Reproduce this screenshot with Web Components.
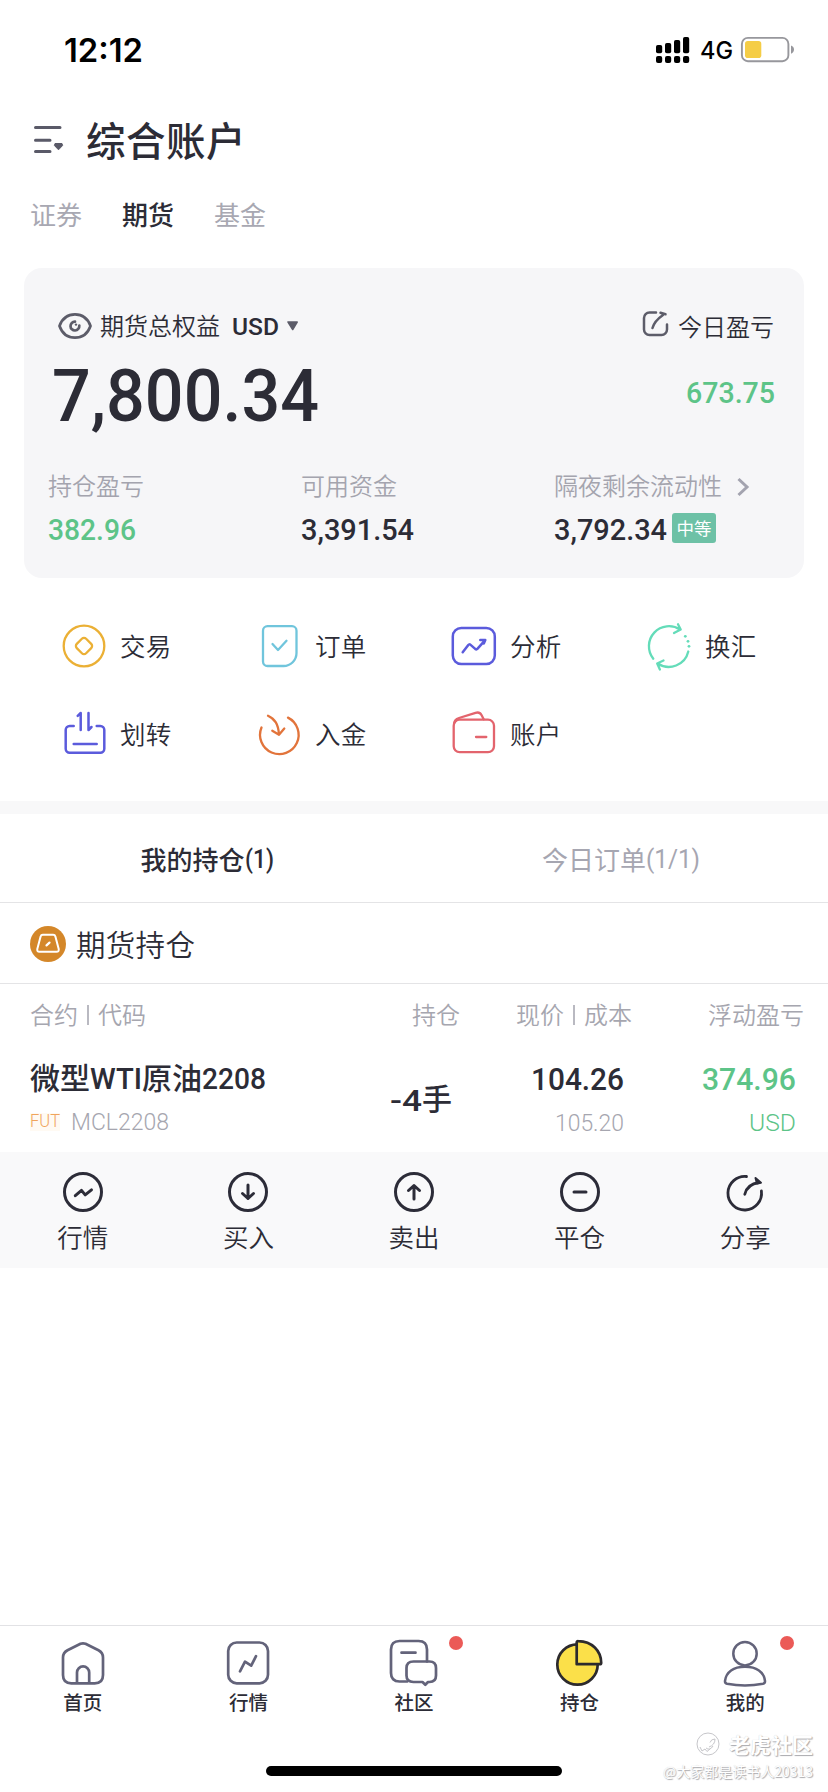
<!DOCTYPE html>
<html lang="zh-CN">
<head>
<meta charset="utf-8">
<title>综合账户</title>
<style>
html,body{margin:0;padding:0;background:#fff}
body{width:828px;height:1792px;overflow:hidden;font-family:"Noto Sans CJK SC",sans-serif;color:#2c2c36}
</style>
</head>
<body>
<account-app></account-app>
<script>
const define = (name, html, setup) => {
  const tpl = document.createElement('template');
  tpl.innerHTML = html;
  customElements.define(name, class extends HTMLElement {
    constructor() {
      super();
      this.attachShadow({mode: 'open'}).append(tpl.content.cloneNode(true));
    }
    connectedCallback() { if (setup) setup(this, this.shadowRoot); }
  });
};

/* Latin text and figures squeezed to a condensed width given by "w" */
define('fit-text', `<style>
:host{display:inline-block;font-family:Roboto,sans-serif;line-height:1;white-space:nowrap;flex:none}
span{display:inline-block;transform-origin:0 0;line-height:1}
</style><span><slot></slot></span>`, (el, root) => {
  const w = +el.getAttribute('w'), s = root.querySelector('span');
  el.style.width = w + 'px';
  new ResizeObserver(() => {
    s.style.transform = 'none';
    s.style.transform = `scaleX(${w / s.getBoundingClientRect().width})`;
  }).observe(s);
});

const ICONS = {
  menu: [32, 34, `<g stroke="#5a5a68" stroke-width="3" stroke-linecap="round"><path d="M4.500 8.5H29M4.500 21.200H19M4.500 32.400H19"/></g><path d="M24 24.500h7l.6 2-4.100 4.300-4.100-4.300z" fill="#5a5a68" stroke="#5a5a68" stroke-linejoin="round"/>`],
  eye: [36, 30, `<g stroke="#5c5c69" stroke-width="2.700"><path d="M2.500 15C5.500 6.500 11.500 3.400 18 3.400S30.500 6.500 33.500 15C30.500 23.500 24.500 26.600 18 26.600S5.500 23.500 2.500 15z"/><path d="M18 10.700a4.400 4.400 0 1 0 4.300 4" stroke-linecap="round"/></g><circle cx="19" cy="13.600" r="1.200" fill="#5c5c69"/>`],
  caret: [14, 12, `<path d="M2 2h9.200L6.700 9.500z" fill="#5c5c69" stroke="#5c5c69" stroke-width="1.500" stroke-linejoin="round"/>`],
  export: [28, 28, `<g stroke="#5c5c69" stroke-width="2.500" stroke-linecap="round" stroke-linejoin="round"><path d="M15 2.500H8.500a5.500 5.500 0 0 0-5.500 5.500V19.500A5.500 5.500 0 0 0 8.500 25h12a5.500 5.500 0 0 0 5.500-5.500V14.500"/><path d="M11.500 18C13 12.500 17 8.500 22 5M19.500 2.800L24.500 4.300"/></g>`],
  chevron: [16, 22, `<path d="M3.500 3l8.500 8-8.500 8" stroke="#a3a3af" stroke-width="3"/>`],
  trade: [48, 48, `<g stroke="#ebb035" stroke-width="2.300"><circle cx="24" cy="24" r="20.300"/><rect x="17.400" y="17.400" width="13.200" height="13.200" rx="3" transform="rotate(45 24 24)"/></g>`],
  order: [48, 48, `<g stroke="#70c5dc" stroke-width="2.300" stroke-linecap="round" stroke-linejoin="round"><path d="M12.500 4.200H37a4.500 4.500 0 0 1 4.500 4.500V31a13 13 0 0 1-13 13h-16a4.500 4.500 0 0 1-4.500-4.500V8.700a4.500 4.500 0 0 1 4.500-4.500z"/><path d="M17.500 22l5.500 6 8.500-9.200"/></g>`],
  analyze: [48, 48, `<g stroke="#5b5bdc" stroke-width="2.500" stroke-linecap="round" stroke-linejoin="round"><rect x="2.800" y="6" width="42" height="36" rx="8.500"/><path d="M12.700 30.300l5.600-7.300q1-1.200 2.300-.1l4.600 4q1.300 1 2.400-.2l7.100-8M30.300 18h5l-1.500 3.500" /></g>`],
  exchange: [48, 48, `<g stroke="#64dcb9" stroke-width="2.300" stroke-linecap="round" stroke-linejoin="round"><path d="M8.300 36.700A20 20 0 0 1 35.200 7.700M33 2.200l2.700 5.300-6.700 3.500M43.300 29.500A20 20 0 0 1 12.700 41.500M18.500 38.500l-6.300 3 2.700 6"/></g><g fill="#64dcb9"><circle cx="40.300" cy="14.300" r="1.400"/><circle cx="43" cy="19.300" r="1.400"/><circle cx="44" cy="24.300" r="1.400"/></g>`],
  transfer: [48, 48, `<g stroke="#5b5bdc" stroke-width="2.500" stroke-linecap="round" stroke-linejoin="round"><path d="M13.700 16h-4a4 4 0 0 0-4 4v18.700a4 4 0 0 0 4 4h30.600a4 4 0 0 0 4-4V20a4 4 0 0 0-4-4h-3.600M13.700 34h23"/><path d="M20.700 20V3L17.700 5.800M28.500 3v17l3-3"/></g>`],
  deposit: [48, 48, `<g stroke="#e2743b" stroke-width="2.300" stroke-linecap="round" stroke-linejoin="round"><path d="M6.500 17.500A19.300 19.300 0 1 0 33 7.600"/><path d="M13 5.700C20 9 23.200 14 24 24.300M17.300 20.700l6.700 4 5.300-6.200"/></g>`],
  wallet: [48, 48, `<g stroke="#e3646d" stroke-width="2.300" stroke-linecap="round" stroke-linejoin="round"><rect x="3.700" y="9.700" width="40.300" height="32.500" rx="6"/><path d="M4 14C4.300 10 6 8.900 9 8l16.500-5.200c3-.9 4.700-.2 6 2.200l2.200 4.200M26 27h10.300"/></g>`],
  weight: [38, 38, `<circle cx="19" cy="19" r="18" fill="#d48729"/><path d="M13.800 9.800h10.400q1.700 0 2.200 1.700l3.300 12.500q.5 2.700-2.200 2.700h-17q-2.700 0-2.200-2.700l3.300-12.500q.5-1.700 2.200-1.700z" stroke="#fff" stroke-width="2"/><path d="M17.500 20.400l3-2.800" stroke="#fff" stroke-width="2.200" stroke-linecap="round"/>`],
  quote: [44, 44, `<g stroke="#2c2c38" stroke-width="3" stroke-linecap="round" stroke-linejoin="round"><circle cx="22" cy="22" r="18.500"/><path d="M14.300 25.700l6.200-5.300 3.700 4.500 6.300-5"/></g>`],
  buy: [44, 44, `<g stroke="#2c2c38" stroke-width="3" stroke-linecap="round" stroke-linejoin="round"><circle cx="22" cy="22" r="18.500"/><path d="M22 15v13.500M16.500 23.500l5.500 5 5.500-5"/></g>`],
  sell: [44, 44, `<g stroke="#2c2c38" stroke-width="3" stroke-linecap="round" stroke-linejoin="round"><circle cx="22" cy="22" r="18.500"/><path d="M22 29V15.500M16.500 20.500l5.500-5 5.500 5"/></g>`],
  close: [44, 44, `<g stroke="#2c2c38" stroke-width="3" stroke-linecap="round"><circle cx="22" cy="22" r="18.500"/><path d="M16 22h12"/></g>`],
  share: [44, 44, `<g stroke="#2c2c38" stroke-width="2.800" stroke-linecap="round" stroke-linejoin="round"><path d="M23.500 6.500A16.800 16.800 0 1 0 38.400 21"/><path d="M21.800 24.300C23.500 17 29 13.500 36 12.500"/></g><path d="M32.500 8l5.500 4.700-4 .8z" fill="#2c2c38" stroke="#2c2c38" stroke-width="2" stroke-linejoin="round"/>`],
  home: [48, 48, `<g stroke="#63637a" stroke-width="2.700" stroke-linejoin="round"><path d="M21.500 5.800q2.500-1 5 0l13 6.500q4.500 2.400 4.500 7.200V37q0 8.300-8.300 8.300H12.300Q4 45.300 4 37V19.500q0-4.800 4.500-7.200z"/><path d="M18 45V34.500a6.100 6.100 0 0 1 12.200 0V45"/></g>`],
  chart: [48, 48, `<g stroke="#63637a" stroke-width="2.700" stroke-linecap="round" stroke-linejoin="round"><rect x="4.200" y="4.500" width="39.800" height="40.800" rx="8.500"/><path d="M16 33.300l5-9.600 6.200 4L32 18.200"/></g>`],
  community: [48, 48, `<g stroke="#63637a" stroke-width="2.700" stroke-linecap="round" stroke-linejoin="round"><path d="M17.300 43.500H9.500Q1 43.500 1 35V11.500Q1 3 9.500 3h19q8.500 0 8.500 8.500V23.500M11.500 14.700h14"/><path d="M23.500 23.500h16q6.500 0 6.500 6.500v7.500q0 6.500-6.500 6.500h-1.500L35.300 46.700 32.500 44h-9q-7 0-7-6.500V30q0-6.500 7-6.500z"/></g>`],
  position: [48, 48, `<g fill="#fbe049" stroke="#2c2a2d" stroke-width="2.700" stroke-linejoin="round"><circle cx="21.500" cy="26.500" r="20.200"/><path d="M20.700 26.200V4.500q0-1.500 1.500-1.400C36 3.400 45 12.500 45.200 24.700q0 1.500-1.500 1.500z"/></g>`],
  mine: [48, 48, `<g stroke="#63637a" stroke-width="2.500" stroke-linejoin="round"><circle cx="24" cy="15.700" r="11.700"/><path d="M4 43C5 34 12.500 28.800 24 28.800S43 34 44 43q.2 2.200-2 2.700-18 3.500-36 0-2.200-.5-2-2.700z"/></g>`],
  signal: [36, 28, `<g fill="#000"><rect x="1" y="9" width="6.200" height="8.200" rx="1.800"/><rect x="10" y="7" width="6.200" height="10.200" rx="1.800"/><rect x="19" y="4" width="6.200" height="13.200" rx="1.800"/><rect x="28" y="1" width="6.200" height="16.200" rx="1.800"/><rect x="1" y="20" width="6.200" height="7" rx="2"/><rect x="10" y="20" width="6.200" height="7" rx="2"/><rect x="19" y="20" width="6.200" height="7" rx="2"/><rect x="28" y="20" width="6.200" height="7" rx="2"/></g>`],
  battery: [56, 28, `<rect x="1.900" y="1.900" width="46.500" height="23.300" rx="6" stroke="#97979c" stroke-width="1.900"/><rect x="5" y="5" width="16.300" height="17" rx="2.800" fill="#f5cd46"/><path d="M51 9.500v8.200q3-1.200 3-4.100t-3-4.100z" fill="#97979c"/>`],
  tiger: [24, 24, `<g stroke="#c6c6ca" stroke-width="1"><circle cx="12" cy="12" r="11"/><path d="M4 15l2 4 3-2 2 2.500 3-2.500M13 15q6-2 6-8-4 0-5 3.500M10 16q4 3 7-2"/></g>`]
};
define('ui-icon', `<style>:host{display:block;flex:none}svg{display:block;overflow:visible}</style>`, (el, root) => {
  const [w, h, body] = ICONS[el.getAttribute('name')];
  root.innerHTML += `<svg width="${w}" height="${h}" viewBox="0 0 ${w} ${h}" fill="none">${body}</svg>`;
});

define('status-bar', `<style>
:host{display:flex;height:100px;align-items:flex-start;color:#000;box-sizing:border-box;padding:36px 32px 0 64px}
.time{font:600 32px/28px Inter,sans-serif;margin-top:-1px}
.net{font:500 24px/30px Inter,sans-serif;margin-left:9px;flex:none}
.gap{flex:1}
ui-icon[name=battery]{margin-left:7px}
</style><fit-text class="time" w="79">12:12</fit-text><div class="gap"></div><ui-icon name="signal"></ui-icon><fit-text class="net" w="33">4G</fit-text><ui-icon name="battery"></ui-icon>`);

define('page-title', `<style>
:host{display:flex;height:80px;padding-left:31px;align-items:flex-start}
ui-icon{margin-top:19px}
h1{margin:9px 0 0 23px;font-size:39.500px;letter-spacing:.5px;line-height:60px;font-weight:500}
</style><ui-icon name="menu"></ui-icon><h1><slot></slot></h1>`);

define('account-tabs', `<style>
:host{display:flex;height:88px;padding:15px 0 0 30px;gap:40px;font-size:26px;line-height:38px;color:#a8a8b2;box-sizing:border-box}
b{font-weight:500;color:#2c2c36}
</style><span>证券</span><b>期货</b><span>基金</span>`);

define('asset-card', `<style>
:host{display:flex;flex-direction:column;box-sizing:border-box;margin:0 24px;height:310px;background:#f6f6f8;border-radius:18px;padding:44px 0 0 25px;font-size:24px;line-height:28px}
.top,.total{display:flex}
.top{height:28px;padding-left:7px;font-weight:350}
.top ui-icon[name=eye]{margin:-1px 0 0 1px}
.top .name{margin:-1px 0 0 7px}
.usd{margin:3px 0 0 12px}
ui-icon[name=caret]{margin:8px 0 0 7px}
.today{display:flex;margin:0 30px 0 auto}
ui-icon[name=export]{margin:-2px 9px 0 0}
.total{height:132px;justify-content:space-between;align-items:flex-start}
.big{font-size:73px;margin:20px 0 0 3px}
.day{font-size:30px;margin:38px 29px 0 0}
.green{color:#5dc488}
fit-text{font-weight:500}
.grid{display:grid;grid-template-columns:253px 253px 1fr}
.k{color:#a4a4ae;font-weight:350;display:flex;height:42px;line-height:26px;margin-left:-1px}
ui-icon[name=chevron]{margin:4px 0 0 13px}
.v{display:flex;font-size:30px;height:30px;margin-left:-1px;padding-top:1px}
.badge{background:#6dc1a6;color:#fff;font-size:17.500px;line-height:29px;height:30px;width:44px;text-align:center;border-radius:3px;margin:-2px 0 0 5px}
</style>
<div class="top"><ui-icon name="eye"></ui-icon><span class="name">期货总权益</span><fit-text class="usd" w="47">USD</fit-text><ui-icon name="caret"></ui-icon><span class="today"><ui-icon name="export"></ui-icon>今日盈亏</span></div>
<div class="total"><fit-text class="big" w="267">7,800.34</fit-text><fit-text class="day green" w="89">673.75</fit-text></div>
<div class="grid">
<div><div class="k">持仓盈亏</div><div class="v green"><fit-text w="88">382.96</fit-text></div></div>
<div><div class="k">可用资金</div><div class="v"><fit-text w="113">3,391.54</fit-text></div></div>
<div><div class="k">隔夜剩余流动性<ui-icon name="chevron"></ui-icon></div><div class="v"><fit-text w="113">3,792.34</fit-text><span class="badge">中等</span></div></div>
</div>`);

define('menu-item', `<style>
:host{display:flex;height:48px;padding-left:36px;font-size:25.500px;line-height:46px;font-weight:350}
span{margin-left:12px;letter-spacing:.3px}
</style><span><slot></slot></span>`, (el, root) => {
  const i = document.createElement('ui-icon');
  i.setAttribute('name', el.getAttribute('icon'));
  root.querySelector('span').before(i);
});

define('action-menu', `<style>
:host{display:grid;grid-template-columns:repeat(4,195px);grid-auto-rows:48px;row-gap:40px;padding:44px 24px 0;height:223px;box-sizing:border-box}
</style><menu-item icon="trade">交易</menu-item><menu-item icon="order">订单</menu-item><menu-item icon="analyze">分析</menu-item><menu-item icon="exchange">换汇</menu-item><menu-item icon="transfer">划转</menu-item><menu-item icon="deposit">入金</menu-item><menu-item icon="wallet">账户</menu-item>`);

define('list-tabs', `<style>
:host{display:grid;grid-template-columns:1fr 1fr;height:102px;box-sizing:border-box;border-top:13px solid #f8f8f9;border-bottom:1px solid #e4e4e6;font-size:26px;line-height:90px;color:#a6a6b1;font-weight:400}
div{display:flex;justify-content:center}
.on{color:#2c2c36;font-weight:500}
fit-text{line-height:1;margin-top:32px;font-size:26px}
</style><div class="on">我的持仓<fit-text w="29">(1)</fit-text></div><div>今日订单<fit-text w="54">(1/1)</fit-text></div>`);

define('section-title', `<style>
:host{display:flex;align-items:center;height:81px;box-sizing:border-box;border-bottom:1px solid #e4e4e6;padding:1px 0 0 29px;font-size:29.500px;font-weight:350;letter-spacing:.3px}
span{margin:-1px 0 0 9px}
</style><ui-icon name="weight"></ui-icon><span><slot></slot></span>`);

define('holdings-table', `<style>
:host{display:block;height:168px;padding:0 24px 0 30px}
.head,.row{display:grid;grid-template-columns:310px 120px 172px 172px}
.head{font-size:24px;line-height:60px;height:62px;color:#a6a6af;font-weight:350;text-align:right}
.head :first-child{text-align:left}
.bar{margin:0 9px;display:inline-block;width:2px;height:20px;background:#b9b9c1;vertical-align:-1px}
.row{height:106px}
.name{display:flex;font-size:30px;font-weight:500;line-height:38px;height:43px;padding-top:11px}
.name fit-text{margin:7px 0 0;font-size:30px}
.code{display:flex;margin-top:12px;align-items:flex-start}
.fut{color:#f0a45c;font-size:17.500px;background:#fffaf3;font-weight:350;margin-top:1px}
.mcl{color:#a6a6af;font-size:24px;font-weight:300;margin-left:11px;margin-top:-2px}
.qty{display:flex;font-size:30px;font-weight:500;line-height:38px;padding-top:32px;justify-content:flex-end}
.qty fit-text{margin-top:8px}
.qty span{margin:0 8px 0 0}
.col{display:flex;flex-direction:column;align-items:flex-end;padding-right:8px}
.p{font-size:31px;font-weight:500;margin-top:18px}
.c{font-size:24px;font-weight:300;color:#a6a6af;margin-top:15.500px}
.green{color:#5dc488}
</style>
<div class="head"><span>合约<i class="bar"></i>代码</span><span>持仓</span><span>现价<i class="bar"></i>成本</span><span>浮动盈亏</span></div>
<div class="row">
<div><div class="name">微型<fit-text w="52">WTI</fit-text>原油<fit-text w="64">2208</fit-text></div><div class="code"><fit-text class="fut" w="30">FUT</fit-text><fit-text class="mcl" w="98">MCL2208</fit-text></div></div>
<div class="qty"><fit-text w="32">-4</fit-text><span>手</span></div>
<div class="col"><fit-text class="p" w="93">104.26</fit-text><fit-text class="c" w="69">105.20</fit-text></div>
<div class="col"><fit-text class="p green" w="94">374.96</fit-text><fit-text class="c green" w="47">USD</fit-text></div>
</div>`);

define('row-actions', `<style>
:host{display:grid;grid-template-columns:repeat(5,1fr);height:116px;background:#f9f9fa;font-size:25.500px;line-height:38px;font-weight:350}
div{display:flex;flex-direction:column;align-items:center;padding-top:18px}
ui-icon{margin-bottom:3px}
</style><div><ui-icon name="quote"></ui-icon>行情</div><div><ui-icon name="buy"></ui-icon>买入</div><div><ui-icon name="sell"></ui-icon>卖出</div><div><ui-icon name="close"></ui-icon>平仓</div><div><ui-icon name="share"></ui-icon>分享</div>`);

define('tab-bar', `<style>
:host{display:grid;grid-template-columns:repeat(5,1fr);height:141px;box-sizing:border-box;border-top:1px solid #e2e2e5;font-size:19.500px;line-height:30px;font-weight:500}
div{display:flex;flex-direction:column;align-items:center;padding-top:12px;position:relative}
ui-icon{margin-bottom:1px}
.dot::after{content:"";position:absolute;width:14px;height:14px;border-radius:50%;background:#eb5a57;right:34px;top:10px}
</style><div><ui-icon name="home"></ui-icon>首页</div><div><ui-icon name="chart"></ui-icon>行情</div><div class="dot"><ui-icon name="community"></ui-icon>社区</div><div><ui-icon name="position"></ui-icon>持仓</div><div class="dot"><ui-icon name="mine"></ui-icon>我的</div>`);

define('home-indicator', `<style>:host{display:block;width:296px;height:10px;border-radius:5px;background:#000;margin:0 auto 16px}</style>`);

define('water-mark', `<style>
:host{position:absolute;right:15px;bottom:11px;display:flex;flex-direction:column;align-items:flex-end;color:#fff;text-shadow:1px 1px 1px #a9a9ad,0 0 1px #ccc}
.a{display:flex;gap:9px;font-size:21px;font-weight:700;line-height:26px;align-items:center}
.b{font-size:14px;line-height:20px;margin-top:4px;white-space:nowrap}
</style><div class="a"><ui-icon name="tiger"></ui-icon>老虎社区</div><div class="b">@大家都是读书人20313</div>`);

define('account-app', `<style>
:host{display:flex;flex-direction:column;position:relative;width:828px;height:1792px;background:#fff}
.space{flex:1}
</style>
<status-bar></status-bar>
<page-title>综合账户</page-title>
<account-tabs></account-tabs>
<asset-card></asset-card>
<action-menu></action-menu>
<list-tabs></list-tabs>
<section-title>期货持仓</section-title>
<holdings-table></holdings-table>
<row-actions></row-actions>
<div class="space"></div>
<tab-bar></tab-bar>
<home-indicator></home-indicator>
<water-mark></water-mark>`);
</script>
</body>
</html>
